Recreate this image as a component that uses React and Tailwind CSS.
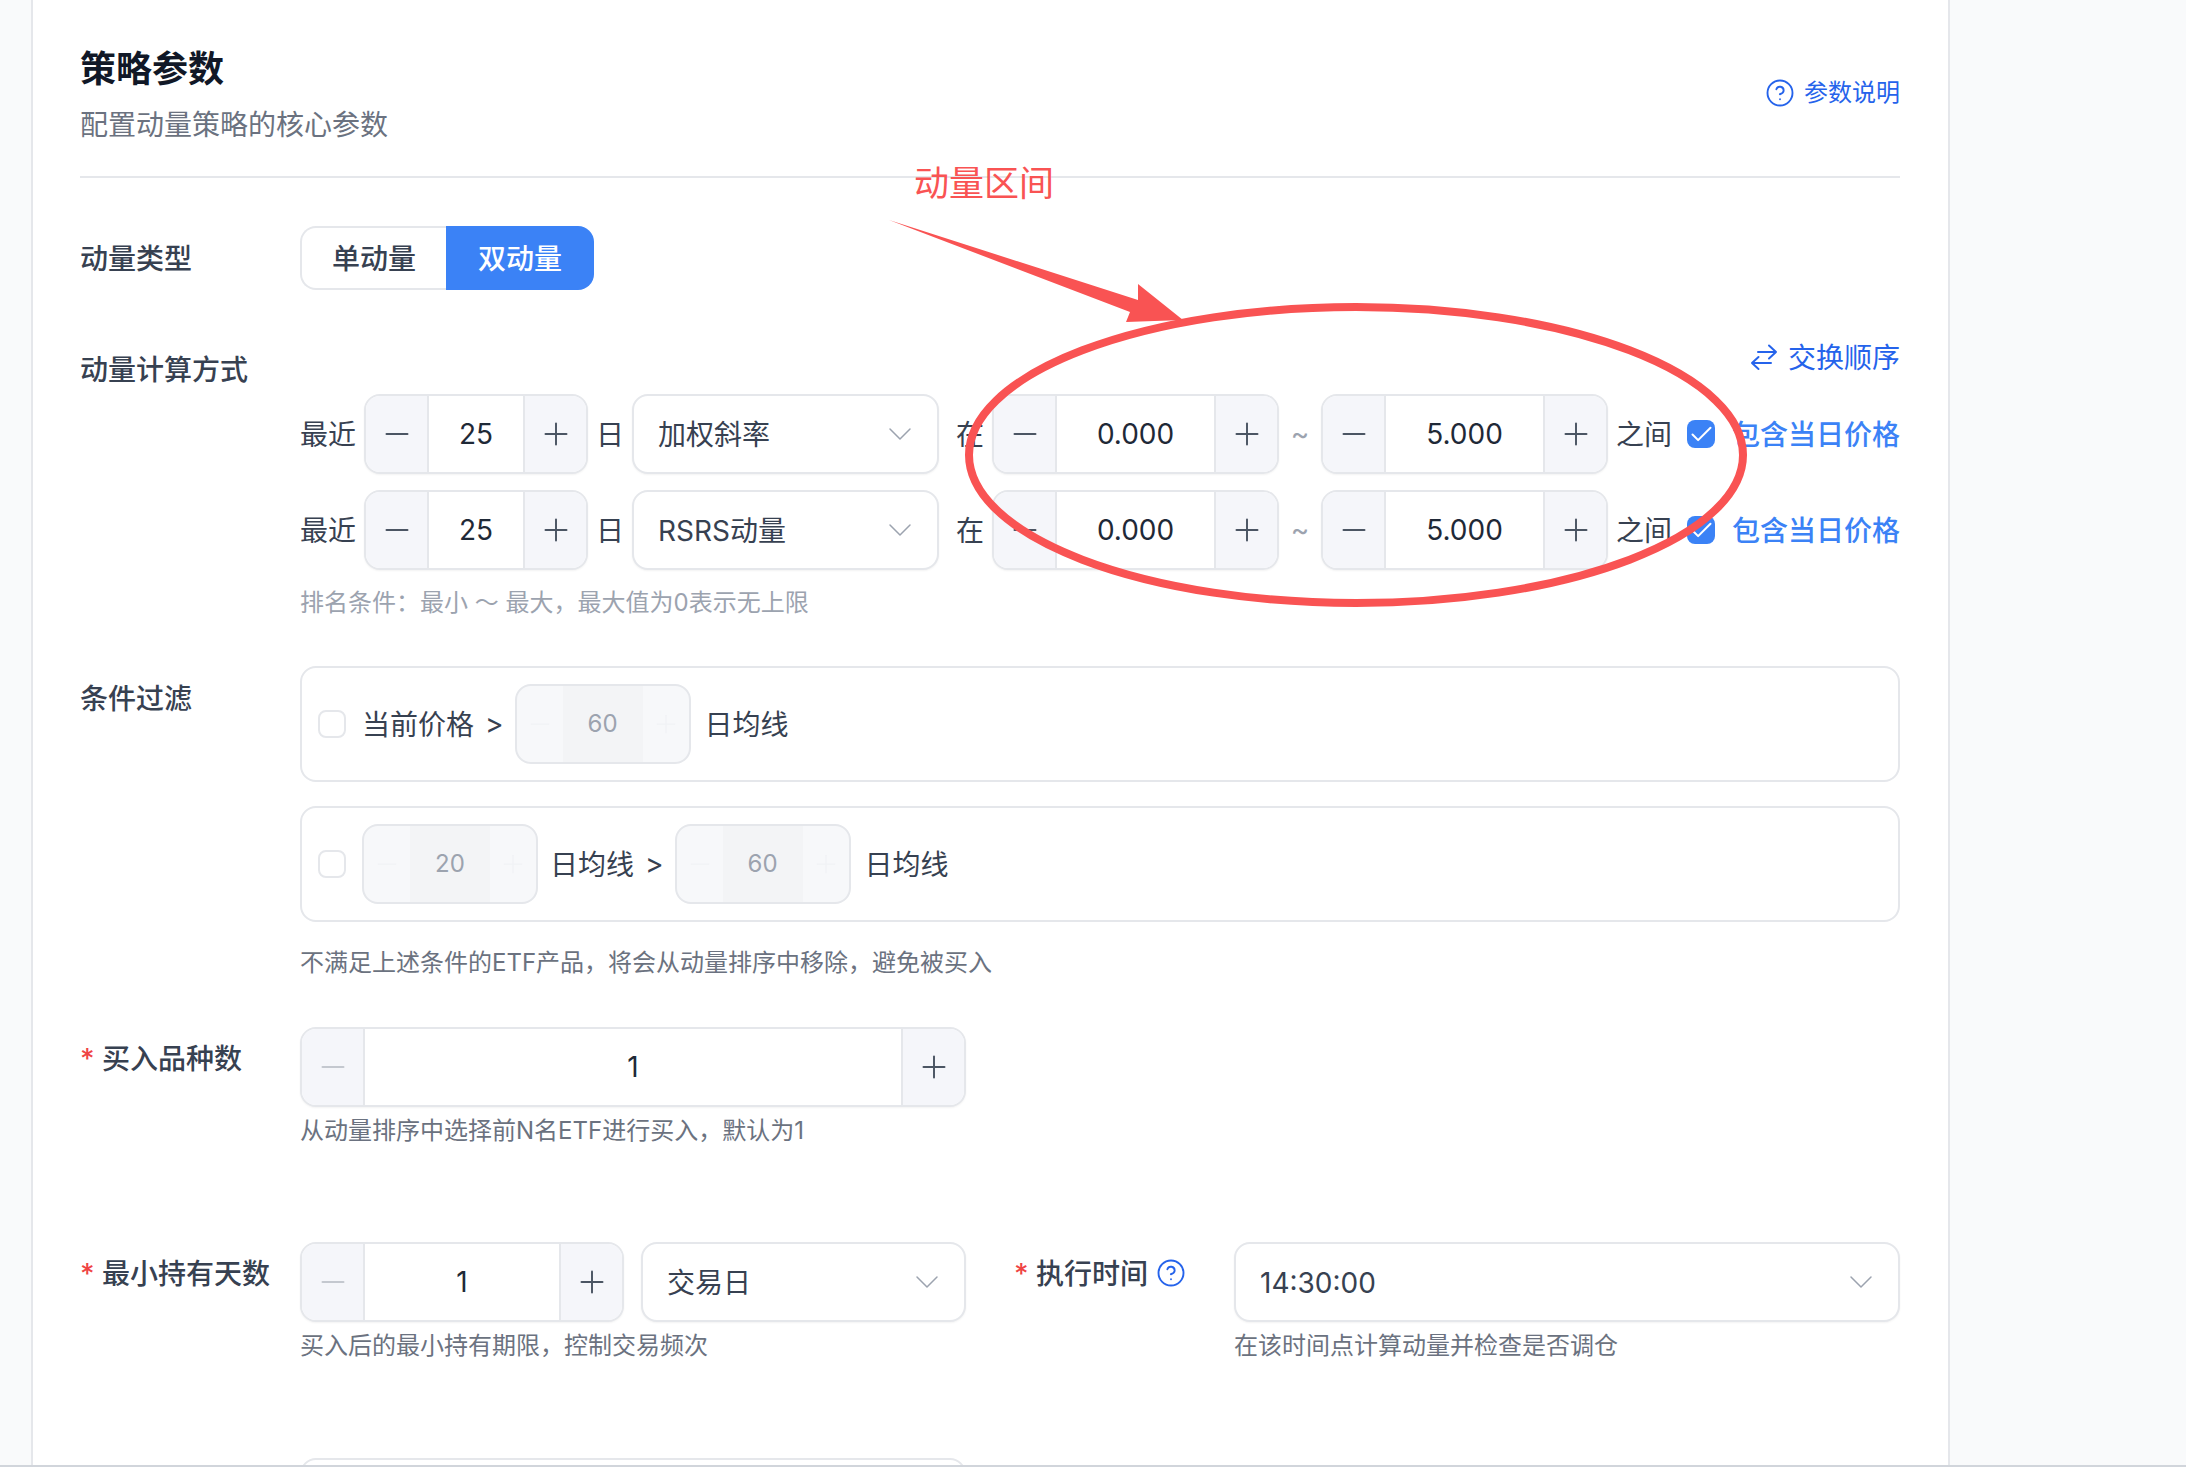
import React from "react";
import { Check, ChevronDown, CircleHelp, Minus, Plus } from "lucide-react";

const Stepper = ({ value, width, side = "w-[63px]", muted = false }) => (
  <div
    className={`flex h-[80px] shrink-0 overflow-hidden rounded-2xl border-2 border-[#e5e7eb] bg-white shadow-xs ${width}`}
  >
    <div
      className={`flex shrink-0 items-center justify-center border-r-2 border-[#e5e7eb] bg-[#f5f6fa] ${side}`}
    >
      <Minus
        size={36}
        strokeWidth={1.3}
        className={muted ? "text-[#c4c8cf]" : "text-[#4b5563]"}
      />
    </div>
    <div className="flex flex-1 items-center justify-center text-[28px] text-[#1f2937]">
      {value}
    </div>
    <div
      className={`flex shrink-0 items-center justify-center border-l-2 border-[#e5e7eb] bg-[#f5f6fa] ${side}`}
    >
      <Plus size={36} strokeWidth={1.3} className="text-[#4b5563]" />
    </div>
  </div>
);

const DisabledStepper = ({ value }) => (
  <div className="flex h-[80px] w-[176px] shrink-0 overflow-hidden rounded-2xl border-2 border-[#e5e7eb] bg-[#f7f8fa]">
    <div className="flex w-[46px] items-center justify-center">
      <Minus size={30} strokeWidth={1} className="text-[#f1f2f5]" />
    </div>
    <div className="flex flex-1 items-center justify-center bg-[#f3f4f6] text-[24px] text-[#9ca3af]">
      {value}
    </div>
    <div className="flex w-[46px] items-center justify-center">
      <Plus size={30} strokeWidth={1} className="text-[#f1f2f5]" />
    </div>
  </div>
);

const Select = ({ value, width }) => (
  <div
    className={`flex h-[80px] shrink-0 items-center justify-between rounded-2xl border-2 border-[#e5e7eb] bg-white pl-[24px] pr-[17px] text-[28px] text-[#374151] shadow-xs ${width}`}
  >
    <span className="pt-[2px]">{value}</span>
    <ChevronDown size={40} strokeWidth={0.9} className="text-[#9ca3af]" />
  </div>
);

const Checkbox = ({ checked }) =>
  checked ? (
    <span className="flex h-[28px] w-[28px] shrink-0 items-center justify-center rounded-lg bg-[#3b82f6]">
      <Check size={27} strokeWidth={1.8} className="text-white" />
    </span>
  ) : (
    <span className="h-[28px] w-[28px] shrink-0 rounded-lg border-2 border-[#e5e7eb] bg-white" />
  );

const Label = ({ children, required, className = "" }) => (
  <div
    className={`relative shrink-0 text-[28px] leading-[40px] font-medium text-[#374151] ${className}`}
  >
    {required && (
      <span className="absolute left-[-22px] top-0 text-[#ef4444]">*</span>
    )}
    {children}
  </div>
);

const MomentumRow = ({ method }) => (
  <div className="flex items-center gap-2 text-[28px] text-[#374151]">
    <span className="w-[56px] shrink-0 pt-[2px]">最近</span>
    <Stepper value="25" width="w-[224px]" />
    <span className="shrink-0 pt-[2px]">日</span>
    <Select value={method} width="w-[307px] mr-[9px]" />
    <span className="shrink-0 pt-[2px]">在</span>
    <Stepper value="0.000" width="w-[287px]" />
    <span className="w-[26px] shrink-0 text-center text-[#9ca3af]">~</span>
    <Stepper value="5.000" width="w-[287px]" />
    <span className="shrink-0 pt-[2px]">之间</span>
    <span className="ml-[7px] flex items-center gap-[17px]">
      <Checkbox checked />
      <span className="whitespace-nowrap pt-[2px] font-medium text-[#3b82f6]">
        包含当日价格
      </span>
    </span>
  </div>
);

const App = () => {
  return (
    <div
      className="relative h-[1474px] w-[2186px] overflow-hidden bg-white"
      style={{ fontFamily: 'Inter, "Noto Sans CJK SC", sans-serif' }}
    >
      <div className="flex h-[1467px] border-b-2 border-[#d1d5db] bg-[#f9fafb]">
        <div className="ml-[31px] w-[1919px] overflow-hidden border-x-2 border-[#e5e7eb] bg-white pl-[47px] pr-[48px] pt-10">
          {/* 标题 */}
          <div className="flex items-center justify-between border-b-2 border-[#e5e7eb] pb-8">
            <div className="pt-[1px]">
              <h2 className="text-[36px] leading-[56px] font-semibold text-[#111827]">
                策略参数
              </h2>
              <p className="mt-2 mb-[-1px] text-[28px] leading-[40px] text-[#6b7280]">
                配置动量策略的核心参数
              </p>
            </div>
            <div className="flex items-center gap-[9px] pt-[2px] text-[24px] text-[#2563eb]">
              <CircleHelp size={30} strokeWidth={1.5} />
              参数说明
            </div>
          </div>

          {/* 动量类型 */}
          <div className="mt-12 flex items-center">
            <Label className="w-[220px] pt-[2px]">动量类型</Label>
            <div className="flex h-[64px] text-[28px] font-medium">
              <div className="flex w-[146px] items-center justify-center rounded-l-2xl border-2 border-r-0 border-[#e5e7eb] pt-[2px] text-[#374151]">
                单动量
              </div>
              <div className="flex w-[148px] items-center justify-center rounded-r-2xl bg-[#3b82f6] pt-[2px] text-white">
                双动量
              </div>
            </div>
          </div>

          {/* 动量计算方式 */}
          <div className="mt-12 flex">
            <Label className="mt-[12px] w-[220px]">动量计算方式</Label>
            <div className="min-w-0 flex-1">
              <div className="flex items-center justify-end gap-[10px] text-[28px] leading-[40px] text-[#2563eb]">
                <svg
                  width="28"
                  height="28"
                  viewBox="0 0 28 28"
                  fill="none"
                  stroke="currentColor"
                  strokeWidth="2"
                  strokeLinecap="round"
                  strokeLinejoin="round"
                >
                  <path d="M8 8h18M19 1.5 26 8l-7 6.5" />
                  <path d="M21 19H2M8.5 13 2 19l6.5 6" />
                </svg>
                <span>交换顺序</span>
              </div>
              <div className="mt-4 flex flex-col gap-4">
                <MomentumRow method="加权斜率" />
                <MomentumRow method="RSRS动量" />
              </div>
              <p className="mt-[17px] mb-[-1px] text-[24px] leading-[32px] text-[#9ca3af]">
                排名条件：最小 ～ 最大，最大值为0表示无上限
              </p>
            </div>
          </div>

          {/* 条件过滤 */}
          <div className="mt-12 flex">
            <Label className="mt-[13px] w-[220px]">条件过滤</Label>
            <div className="min-w-0 flex-1">
              <div className="flex flex-col gap-6 text-[28px] text-[#374151]">
                <div className="flex items-center rounded-2xl border-2 border-[#e5e7eb] px-4 py-4">
                  <Checkbox />
                  <span className="ml-4 pt-[2px]">当前价格</span>
                  <span className="ml-[11px]">{">"}</span>
                  <span className="ml-[11px]">
                    <DisabledStepper value="60" />
                  </span>
                  <span className="ml-[14px] pt-[2px]">日均线</span>
                </div>
                <div className="flex items-center rounded-2xl border-2 border-[#e5e7eb] px-4 py-4">
                  <Checkbox />
                  <span className="ml-4">
                    <DisabledStepper value="20" />
                  </span>
                  <span className="ml-[12px] pt-[2px]">日均线</span>
                  <span className="ml-[11px]">{">"}</span>
                  <span className="ml-[11px]">
                    <DisabledStepper value="60" />
                  </span>
                  <span className="ml-[14px] pt-[2px]">日均线</span>
                </div>
              </div>
              <p className="mt-[25px] mb-[-1px] text-[24px] leading-[32px] text-[#6b7280]">
                不满足上述条件的ETF产品，将会从动量排序中移除，避免被买入
              </p>
            </div>
          </div>

          {/* 买入品种数 */}
          <div className="mt-[49px] flex">
            <Label required className="ml-[22px] mt-[12px] w-[198px]">
              买入品种数
            </Label>
            <div>
              <Stepper value="1" width="w-[666px]" muted />
              <p className="mt-2 text-[24px] leading-[32px] text-[#6b7280]">
                从动量排序中选择前N名ETF进行买入，默认为1
              </p>
            </div>
          </div>

          {/* 最小持有天数 / 执行时间 */}
          <div className="mt-[95px] flex">
            <Label required className="ml-[22px] mt-[12px] w-[198px]">
              最小持有天数
            </Label>
            <div className="w-[666px] shrink-0">
              <div className="flex gap-[17px]">
                <Stepper value="1" width="w-[324px]" muted />
                <Select value="交易日" width="w-[325px]" />
              </div>
              <p className="mt-2 text-[24px] leading-[32px] text-[#6b7280]">
                买入后的最小持有期限，控制交易频次
              </p>
            </div>
            <Label
              required
              className="ml-[70px] mt-[12px] flex w-[198px] items-start gap-[8px]"
            >
              执行时间
              <CircleHelp
                size={30}
                strokeWidth={1.5}
                className="mt-[4px] text-[#2563eb]"
              />
            </Label>
            <div className="min-w-0 flex-1">
              <Select value="14:30:00" width="w-full" />
              <p className="mt-2 text-[24px] leading-[32px] text-[#6b7280]">
                在该时间点计算动量并检查是否调仓
              </p>
            </div>
          </div>

          {/* 下一行，被截断 */}
          <div className="mt-[96px] ml-[220px] h-[80px] w-[666px] rounded-2xl border-2 border-[#e5e7eb]" />
        </div>
      </div>

      {/* 红色标注 */}
      <span className="absolute left-[914px] top-[160px] text-[35px] leading-[46px] text-[#f95353]">
        动量区间
      </span>
      <svg
        className="pointer-events-none absolute left-0 top-0"
        width="2186"
        height="1474"
        fill="none"
      >
        <ellipse
          cx="1356"
          cy="455"
          rx="387"
          ry="148"
          stroke="#f95353"
          strokeWidth="8"
        />
        <polygon
          points="889,220 1138,300 1138,284 1183,320 1126,322 1130,312"
          fill="#f95353"
        />
      </svg>
    </div>
  );
};

export default App;
